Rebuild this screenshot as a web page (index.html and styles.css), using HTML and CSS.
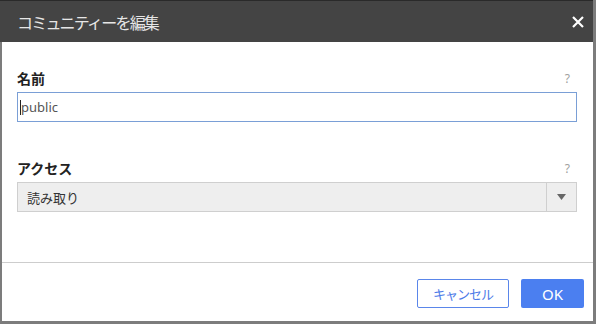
FILE: index.html
```
<!DOCTYPE html>
<html>
<head>
    <title>コミュニティーを編集</title>
    <link rel="stylesheet" href="styles.css">
</head>
<body>
    <div class="dialog">
        <div class="dialog-header">
            <span class="dialog-title">コミュニティーを編集</span>
            <svg class="close-icon" width="12" height="12" viewBox="0 0 12 12">
                <path d="M1 1 L11 11 M11 1 L1 11" stroke="#fff" stroke-width="2.2" />
            </svg>
        </div>
        <div class="dialog-main">
            <div class="dialog-form">
                <div class="field-label first">
                    <span>名前</span>
                    <span class="help">?</span>
                </div>
                <div class="text-input"><span class="caret"></span>public</div>

                <div class="field-label">
                    <span>アクセス</span>
                    <span class="help">?</span>
                </div>
                <div class="select-box">
                    <span class="select-text">読み取り</span>
                    <span class="select-arrow">
                        <svg width="9" height="6" viewBox="0 0 9 6"><path d="M0 0 L9 0 L4.5 6 Z" fill="#666" /></svg>
                    </span>
                </div>
            </div>
            <div class="dialog-footer">
                <button class="cancel-button">キャンセル</button>
                <button class="ok-button">OK</button>
            </div>
        </div>
    </div>
</body>
</html>
```

FILE: styles.css
```
body {
    margin: 0;
    font-family: "Noto Sans", "Noto Sans CJK JP", sans-serif;
    background-color: #fff;
}

.dialog {
    width: 596px;
    height: 324px;
    box-sizing: border-box;
    border-right: 3px solid #7c7c7c;
    border-bottom: 3px solid #7c7c7c;
    display: flex;
    flex-direction: column;
}

.dialog-header {
    height: 42px;
    box-sizing: border-box;
    border-top: 1px solid #2a2a2a;
    background-color: #444;
    display: flex;
    align-items: center;
    justify-content: space-between;
    padding: 0 9px 0 17px;
}

.dialog-title {
    color: #e6e6e6;
    font-size: 16px;
    letter-spacing: -1.8px;
    font-family: "Noto Sans CJK JP", sans-serif;
}

.dialog-main {
    flex: 1;
    border-left: 2px solid #7c7c7c;
    display: flex;
    flex-direction: column;
}

.dialog-form {
    flex: 1;
    padding: 0 16px 0 15px;
}

.field-label {
    display: flex;
    justify-content: space-between;
    align-items: center;
    height: 20px;
    margin-top: 36px;
    margin-bottom: 4px;
    font-family: "Noto Sans CJK JP", sans-serif;
    font-size: 14px;
    font-weight: bold;
    color: #222;
}

.field-label.first {
    margin-top: 26px;
}

.help {
    font-family: "Noto Sans", sans-serif;
    font-weight: normal;
    font-size: 12px;
    color: #a0a0a0;
    margin-right: 7px;
}

.text-input {
    height: 30px;
    box-sizing: border-box;
    border: 1px solid #7a9fd6;
    display: flex;
    align-items: center;
    padding-left: 2px;
    font-size: 13px;
    color: #555;
}

.caret {
    width: 1px;
    height: 15px;
    background-color: #222;
}

.select-box {
    height: 30px;
    box-sizing: border-box;
    border: 1px solid #cfcfcf;
    background-color: #eee;
    display: flex;
    align-items: center;
    justify-content: space-between;
}

.select-text {
    padding-left: 9px;
    font-family: "Noto Sans CJK JP", sans-serif;
    font-size: 13px;
    color: #333;
}

.select-arrow {
    width: 29px;
    height: 28px;
    border-left: 1px solid #cfcfcf;
    display: flex;
    align-items: center;
    justify-content: center;
}

.dialog-footer {
    border-top: 1px solid #cdcdcd;
    padding: 16px 9px 13px 0;
    display: flex;
    justify-content: flex-end;
    gap: 12px;
}

.cancel-button {
    width: 92px;
    height: 29px;
    border: 1px solid #5a86ea;
    border-radius: 2px;
    background-color: #fff;
    color: #4d7be8;
    font-family: "Noto Sans CJK JP", sans-serif;
    font-size: 13px;
    letter-spacing: -1px;
}

.ok-button {
    width: 63px;
    height: 29px;
    border: none;
    border-radius: 2px;
    background-color: #4b7ff0;
    color: #fff;
    font-family: "Noto Sans", sans-serif;
    font-size: 15px;
}
```
